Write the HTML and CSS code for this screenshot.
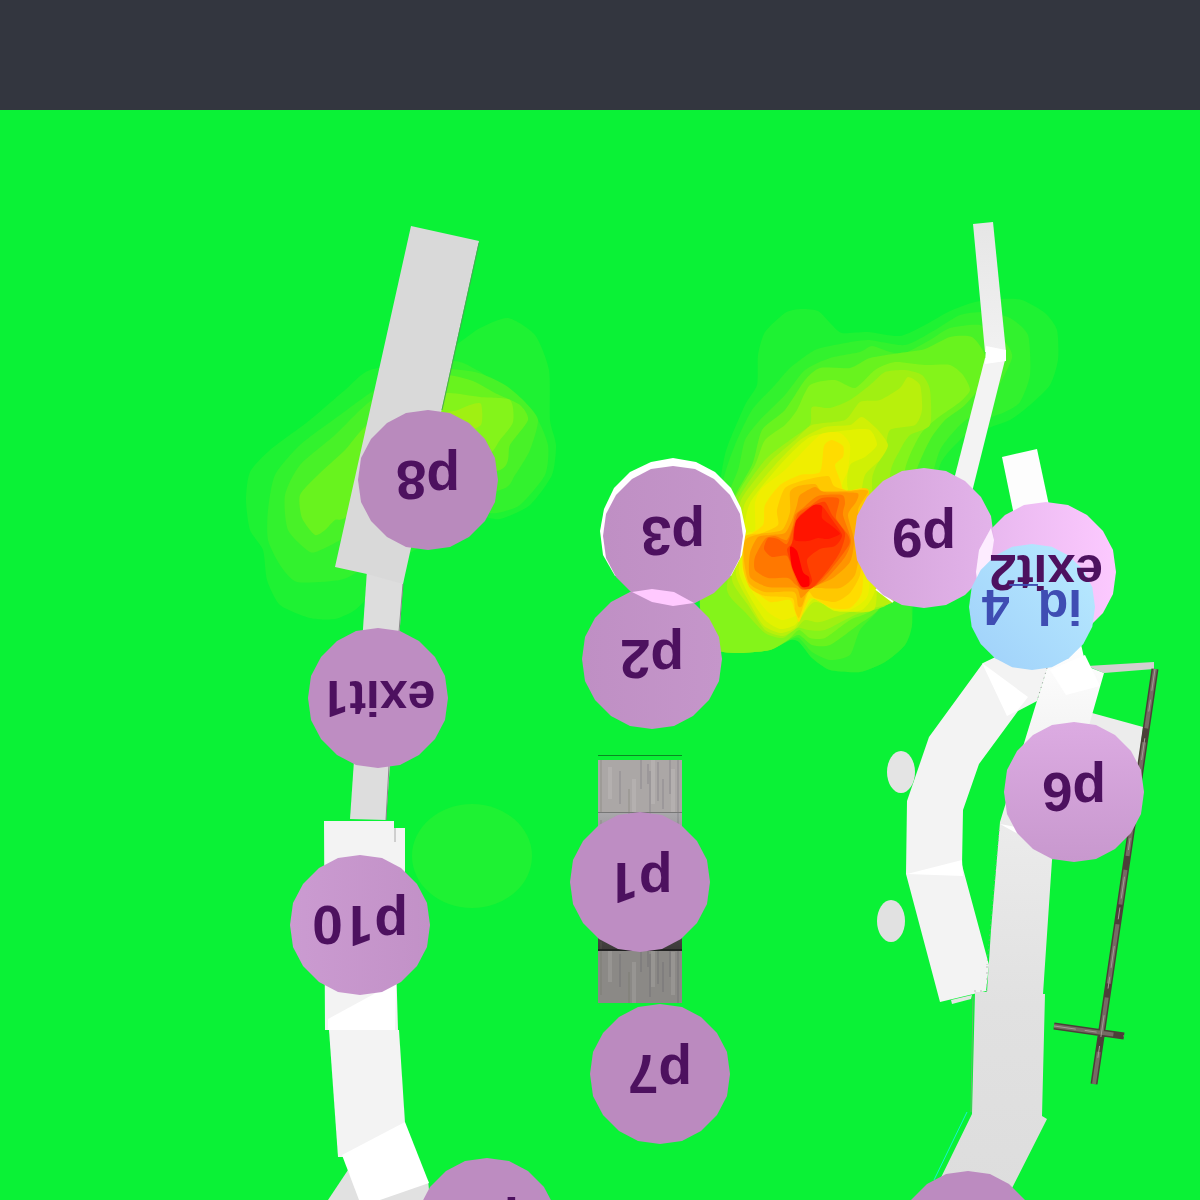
FILE: index.html
```
<!DOCTYPE html>
<html lang="en">
<head>
<meta charset="utf-8">
<title>Heat map</title>
<link rel="stylesheet" href="styles.css">
</head>
<body>
<header class="topbar"></header>
<main class="stage">
<svg class="map" viewBox="0 110 1200 1090" role="img" aria-label="Heat map with markers">
  <defs>
    <polygon id="disc" points="0,-70 22,-67 41,-57 57,-41 67,-22 70,0 67,22 57,41 41,57 22,67 0,70 -22,67 -41,57 -57,41 -67,22 -70,0 -67,-22 -57,-41 -41,-57 -22,-67"/>
    <linearGradient id="column" x1="0" y1="0" x2="0" y2="1">
      <stop offset="0" stop-color="#ffffff"/><stop offset=".3" stop-color="#ececec"/><stop offset=".65" stop-color="#e1e1e1"/><stop offset="1" stop-color="#dddddd"/>
    </linearGradient>
    <linearGradient id="stick" x1="0" y1="0" x2="0" y2="1">
      <stop offset="0" stop-color="#e6e6e6"/><stop offset="1" stop-color="#f1f1f1"/>
    </linearGradient>
    <linearGradient id="g3"><stop offset="0" stop-color="#bf8fc4"/><stop offset="1" stop-color="#c596ca"/></linearGradient>
    <linearGradient id="g10"><stop offset="0" stop-color="#cb9bd1"/><stop offset="1" stop-color="#c291c7"/></linearGradient>
    <linearGradient id="g9"><stop offset="0" stop-color="#d3a3d9"/><stop offset="1" stop-color="#e3b3ea"/></linearGradient>
    <linearGradient id="g6" x1="0" y1="0" x2="0" y2="1"><stop offset="0" stop-color="#dcabe2"/><stop offset="1" stop-color="#c898ce"/></linearGradient>
    <linearGradient id="gx"><stop offset="0" stop-color="#e6b6ed"/><stop offset="1" stop-color="#fcc9ff"/></linearGradient>
    <linearGradient id="gid" x1="1" y1="0" x2="0" y2="1"><stop offset="0" stop-color="#b9ebff"/><stop offset="1" stop-color="#9fd0fa"/></linearGradient>
    <linearGradient id="dark" x1="0" y1="0" x2="0" y2="1"><stop offset="0" stop-color="#aaa9ac"/><stop offset="1" stop-color="#3c3a38"/></linearGradient>
    <pattern id="streaks" width="84" height="61" patternUnits="userSpaceOnUse" x="598" y="759">
      <path d="M3 0V53M31 30V61" stroke="#665" stroke-width="1" opacity=".4"/>
      <path d="M12 8V40M36 20V61M55 0V45M75 10V53" stroke="#fff" stroke-width="4" opacity=".1"/>
      <path d="M22 12V45M43 0V30M50 5V25M52 12V55M60 3V42M65 20V50M72 0V35M80 0V61" stroke="#334" stroke-width="2" opacity=".13"/>
    </pattern>
  </defs>

  <rect class="ground" x="0" y="110" width="1200" height="1090"/>
  <g id="heat"></g>
  <ellipse cx="472" cy="856" rx="60" ry="52" fill="#1ef233"/>

  <!-- left walkway -->
  <polygon points="367,570 404,560 403,584 386,820 350,819" fill="#dddddd"/>
  <path d="M403 584L399 632M389 766L386 820" stroke="#888" stroke-width="1"/>
  <polygon points="411,226 479,241 403,584 367,574 335,567" fill="#d9d9d9"/>
  <path d="M479 243L442 410" stroke="#49a855" stroke-width="1"/>
  <polygon points="324,821 394,821 394,828 405,828 405,900 396,960 398,1030 325,1030" fill="#f3f3f3"/>
  <path d="M395 828V842" stroke="#aaa" stroke-width="1"/>
  <polygon points="328,1019 396,982 395,1030 328,1030" fill="#fff"/>
  <polygon points="329,1030 399,1030 405,1123 343,1157 338,1157" fill="#f3f3f3"/>
  <polygon points="348,1170 328,1200 362,1200" fill="#e1e1e1"/>
  <polygon points="378,1200 428,1180 430,1200" fill="#e1e1e1"/>
  <polygon points="342,1155 405,1122 429,1183 380,1200 359,1200" fill="#fff"/>

  <!-- centre platform -->
  <path d="M598 755.500H682" stroke="#0a8a22" stroke-width="1"/>
  <rect x="598" y="760" width="84" height="52" fill="#aba7a6"/>
  <rect x="598" y="812" width="84" height="138" fill="url(#dark)"/>
  <rect x="598" y="951" width="84" height="52" fill="#8b8986"/>
  <rect x="598" y="760" width="84" height="243" fill="url(#streaks)"/>
  <path d="M598 812.500H682" stroke="#777" stroke-width="1"/>
  <path d="M598 950H682" stroke="#222" stroke-width="2"/>

  <!-- right walkways -->
  <polygon points="973,224 993,222 1006,352 985,352" fill="url(#stick)"/>
  <polygon points="985,358 1005,360 970,500 950,495" fill="#f3f3f3"/>
  <polygon points="986,346 1006,350 1006,361 985,364" fill="#fff"/>
  <polygon points="1002,457 1037,449 1050,510 1015,520" fill="#fdfdfd"/>
  <polygon points="1087,666 1154,662 1154,669 1104,673" fill="#d3d0d0"/>
  <polygon points="1092,713 1143,727 1135,790 1080,740" fill="#ececec"/>
  <polygon points="983,663 1010,650 1050,660 1037,701 1018,711 979,764 963,810 962,865 989,965 986,991 940,1002 906,874 907,801 929,737" fill="#f3f3f3"/>
  <polygon points="982,663 1028,697 1017,711 1007,716" fill="#fff"/>
  <polygon points="907,874 962,860 963,876" fill="#fff"/>
  <polygon points="951,1000 972,995 971,999 952,1004" fill="#e4e4e4"/>
  <polygon points="1047,668 1080,640 1086,666 1104,673 1090,722 1052,860 1043,994 1045,994 1042,1116 1047,1119 1006,1200 930,1200 972,1114 975,992 987,992 991,930 1000,822 1025,740" fill="url(#column)"/>
  <polygon points="1050,670 1085,655 1100,686 1066,695" fill="#fff"/>
  <polygon points="1000,824 1016,827 1020,835" fill="#fff"/>
  <path d="M1047 668L1037 701M999 830L987 965" stroke="#999" stroke-width="1" stroke-dasharray="1 4"/>
  <path d="M973 996L971 1112" stroke="#63b96d" stroke-width="1"/>
  <path d="M974 991H987V965" fill="none" stroke="#bbb" stroke-width="1" stroke-dasharray="2 4"/>
  <path d="M967 1112L934 1180" stroke="#12f5d0" stroke-width="1"/>
  <ellipse cx="901" cy="772" rx="14" ry="21" fill="#e4e4e4"/>
  <ellipse cx="891" cy="921" rx="14" ry="21" fill="#e1e1e1"/>

  <!-- fence pole -->
  <g class="pole">
    <path class="pole-base" d="M1155 669L1094 1084M1054 1026L1124 1036"/>
    <path class="pole-mid" d="M1155 669L1094 1084M1054 1026L1124 1036"/>
    <path class="pole-grain" d="M1155 669L1094 1084M1054 1026L1124 1036"/>
  </g>

  <!-- markers -->
  <polygon points="673,458 696,462 715,472 731,488 741,508 746,531 742,555 731,576 615,576 603,555 600,531 604,509 614,488 630,472 651,462" fill="#fff"/>
  <path d="M876 589L893 602" stroke="#fff" stroke-width="2"/>
  <g class="marker" transform="translate(428 480)"><use href="#disc" fill="#b98abd"/><text y="19" transform="rotate(180)">p8</text></g>
  <g class="marker" transform="translate(673 536)"><use href="#disc" fill="url(#g3)"/><text y="19" transform="rotate(180)">p3</text></g>
  <g class="marker" transform="translate(652 659)"><use href="#disc" fill="url(#g3)"/><text y="19" transform="rotate(180)">p2</text></g>
  <polygon points="632,592 652,589 674,592 694,603 673,606 652,602" fill="#ffc9ff"/>
  <g class="marker" transform="translate(640 882)"><use href="#disc" fill="#be8dc3"/><text y="19" transform="rotate(180)">p<tspan class="one">1</tspan></text></g>
  <g class="marker" transform="translate(660 1074)"><use href="#disc" fill="#bb8abf"/><text y="19" transform="rotate(180)">p7</text></g>
  <g class="marker" transform="translate(360 925)"><use href="#disc" fill="url(#g10)"/><text y="19" transform="rotate(180)">p<tspan class="one">1</tspan>0</text></g>
  <g class="marker small" transform="translate(378 698)"><use href="#disc" fill="#be8dc2"/><text y="17" transform="rotate(180)">exit<tspan class="one">1</tspan></text></g>
  <g class="marker" transform="translate(1074 792)"><use href="#disc" fill="url(#g6)"/><text y="19" transform="rotate(180)">p6</text></g>
  <use href="#disc" transform="translate(1046 572)" fill="url(#gx)"/>
  <g class="marker" transform="translate(924 538)"><use href="#disc" fill="url(#g9)"/><text y="19" transform="rotate(180)">p9</text></g>
  <polygon points="991,528 994,540 991,560 977,580 976,572 979,550" fill="#fdecff"/>
  <use href="#disc" transform="translate(1032 607) scale(.9)" fill="url(#gid)"/>
  <g class="marker small" transform="translate(1046 572)"><text y="17" transform="rotate(180)">exit2</text></g>
  <g class="marker small person" transform="translate(1032 607)"><text y="17" transform="rotate(180)">id_4</text></g>
  <g class="marker" transform="translate(487 1228)"><use href="#disc" fill="#bd8cc1"/><text y="19" transform="rotate(180)">p4</text></g>
  <use href="#disc" transform="translate(968 1241)" fill="#bc8bc0"/>
</svg>
</main>
<script src="heat.js"></script>
</body>
</html>
```
FILE: styles.css
```
html {
  background: #0af236;
}
body {
  margin: 0;
  font-family: "Liberation Sans", Arial, sans-serif;
}
.topbar {
  height: 110px;
  background: #33363f;
}
.stage {
  overflow: hidden;
}
.map {
  display: block;
  width: 100%;
}
.ground {
  fill: #0af236;
}
.marker text {
  font-size: 55px;
  font-weight: 700;
  text-anchor: middle;
  fill: #4d115f;
}
.marker.small text {
  font-size: 50px;
}
.marker.person text {
  fill: #3f4db3;
}
.one {
  font-family: Roboto, sans-serif;
}
.pole path {
  fill: none;
}
.pole-base {
  stroke: #4c3f39;
  stroke-width: 7;
}
.pole-mid {
  stroke: #766b64;
  stroke-width: 4;
  stroke-dasharray: 60 14 35 20;
}
.pole-grain {
  stroke: #a39b95;
  stroke-width: 1;
  stroke-dasharray: 22 9 12 27;
}
```
FILE: heat.js
```
// Contours of the heat map, lowest level first: [colour, x, y, x, y, ...]
const contours = [
  ["#1ef233", 370,370, 345,390, 310,420, 270,450, 250,472, 246,500, 250,530, 263,550, 267,580, 280,605, 310,618, 335,619, 355,610, 375,590, 400,560, 470,518, 500,519, 530,505, 552,475, 556,445, 550,420, 549,370, 535,335, 508,318, 480,328, 460,342, 430,360],
  ["#32f22e", 378,388, 340,415, 300,445, 275,475, 268,510, 268,540, 280,565, 297,582, 340,580, 360,570, 400,540, 470,515, 497,513, 520,505, 545,475, 548,445, 535,415, 510,395, 485,375, 460,362, 430,362],
  ["#48f228", 372,400, 335,435, 300,465, 285,495, 288,530, 310,552, 325,548, 350,535, 400,510, 500,490, 515,475, 530,450, 538,420, 525,402, 505,385, 475,372, 430,370],
  ["#68f31e", 367,425, 345,450, 318,475, 300,495, 302,518, 315,535, 325,530, 335,520, 345,518, 400,490, 500,470, 510,445, 528,420, 520,405, 495,393, 470,380, 430,376],
  ["#84f41a", 430,397, 450,393, 480,397, 510,400, 513,422, 500,440, 485,455, 430,430],
  ["#a0f012", 440,415, 458,410, 470,405, 481,404, 481,425, 460,432],

  ["#1ef233", 722,470, 728,445, 745,405, 757,385, 758,355, 765,332, 785,313, 800,309, 818,311, 832,325, 842,333, 868,332, 900,336, 925,325, 950,311, 975,302, 1000,299, 1022,300, 1045,313, 1057,330, 1058,360, 1050,385, 1030,405, 1010,420, 985,430, 970,450, 950,480, 930,520, 915,580, 913,605, 912,625, 905,645, 885,662, 860,672, 830,670, 812,658, 799,642, 790,640, 770,650, 740,653, 715,648, 700,600],
  ["#32f22e", 722,485, 735,445, 752,410, 775,385, 790,368, 815,350, 840,344, 868,340, 905,345, 935,330, 960,315, 985,312, 1010,318, 1028,335, 1030,375, 1020,402, 1005,412, 985,420, 960,440, 940,465, 930,520, 912,580, 912,625, 905,645, 885,662, 860,672, 830,670, 812,658, 799,642, 790,640, 770,650, 740,653, 715,648, 700,600],
  ["#48f228", 722,510, 738,470, 745,440, 760,420, 785,395, 805,370, 830,358, 860,352, 872,346, 890,352, 905,353, 930,340, 950,328, 980,325, 1003,340, 1012,358, 990,400, 960,425, 940,450, 928,490, 900,570, 880,608, 860,630, 850,655, 830,660, 812,652, 799,638, 790,640, 770,650, 740,653, 715,648, 700,600],
  ["#68f31e", 728,510, 752,465, 762,430, 785,410, 805,380, 820,368, 850,368, 870,358, 900,353, 925,349, 950,337, 972,337, 985,355, 985,380, 965,405, 945,420, 930,440, 915,475, 900,550, 880,607, 858,625, 830,645, 812,645, 799,635, 788,640, 770,650, 740,653, 715,648, 700,600],
  ["#84f41a", 732,505, 755,465, 765,440, 785,425, 797,410, 810,385, 835,380, 855,388, 875,370, 895,362, 925,365, 950,365, 963,375, 970,390, 960,402, 935,420, 920,435, 905,470, 895,550, 875,607, 850,620, 825,638, 810,638, 799,630, 788,640, 770,650, 740,653, 715,648, 700,600],
  ["#a0f012", 738,500, 765,460, 790,440, 810,425, 812,407, 830,408, 850,400, 870,385, 885,372, 905,370, 922,375, 930,390, 930,425, 910,435, 900,450, 890,475, 890,550, 890,602, 855,615, 825,630, 808,630, 797,628, 783,638, 765,633, 745,612, 727,590, 735,540],
  ["#b8f00c", 741,500, 770,462, 795,440, 812,425, 845,420, 860,402, 880,400, 900,388, 908,377, 920,385, 922,410, 915,425, 890,430, 885,450, 872,480, 880,550, 895,600, 850,612, 820,622, 805,620, 797,628, 783,636, 765,630, 748,605, 732,580, 737,540],
  ["#d0f005", 745,503, 775,465, 800,440, 825,427, 850,425, 862,417, 878,430, 888,445, 880,460, 865,475, 862,500, 875,550, 875,608, 845,611, 815,602, 803,615, 795,628, 780,633, 763,625, 748,600, 736,575, 740,540],
  ["#e2f200", 750,503, 780,465, 810,437, 850,430, 870,430, 877,445, 865,457, 850,465, 848,490, 870,550, 875,590, 862,610, 835,611, 814,599, 804,612, 795,625, 780,629, 765,620, 750,597, 739,572, 742,540],
  ["#f0ee00", 755,503, 762,488, 785,470, 820,435, 840,433, 850,445, 848,470, 842,492, 868,550, 868,595, 850,610, 832,609, 812,597, 804,608, 795,616, 782,620, 768,612, 753,593, 742,570, 745,535, 755,530],
  ["#ffdc00", 763,525, 765,505, 780,485, 800,475, 820,472, 824,446, 832,440, 843,446, 843,457, 835,465, 840,480, 845,491, 868,491, 864,550, 862,592, 850,608, 832,608, 812,598, 806,605, 799,622, 795,612, 790,600, 770,602, 755,590, 745,570, 745,540],
  ["#ffc800", 778,525, 777,510, 785,488, 805,480, 828,476, 834,486, 850,491, 869,491, 862,550, 860,575, 850,593, 835,602, 815,598, 809,592, 804,604, 799,618, 795,610, 792,598, 765,596, 750,588, 743,568, 744,537, 762,533],
  ["#ffb000", 782,530, 790,512, 790,492, 798,486, 815,484, 822,491, 845,491, 868,491, 858,510, 860,545, 855,575, 840,588, 815,588, 808,590, 802,606, 798,606, 794,592, 765,592, 749,583, 744,560, 745,540, 760,534],
  ["#ff9400", 785,533, 792,520, 797,505, 800,495, 815,487, 824,492, 857,493, 856,502, 848,515, 854,540, 850,562, 833,578, 812,588, 801,598, 796,588, 768,587, 750,577, 750,553, 758,537, 770,535],
  ["#ff7800", 787,540, 793,525, 795,515, 804,507, 818,496, 842,495, 845,503, 843,515, 851,540, 845,557, 825,580, 806,590, 796,585, 788,578, 768,578, 755,570, 755,557, 765,539, 775,536],
  ["#ff5c00", 787,544, 793,528, 798,513, 810,506, 822,498, 839,499, 836,518, 848,535, 849,545, 832,568, 815,586, 801,589, 793,572, 787,556, 772,557, 764,549, 768,538, 778,539],
  ["#ff4000", 792,543, 794,528, 799,516, 812,506, 825,502, 832,515, 845,533, 840,552, 828,570, 812,588, 801,587, 793,568, 787,550],
  ["#ff2800", 793,540, 795,526, 800,516, 815,505, 823,507, 831,518, 842,535, 835,546, 820,549, 807,560, 812,580, 808,586, 800,582, 790,552],
  ["#ff1400", 794,538, 796,521, 806,511, 814,505, 822,506, 822,518, 832,526, 840,534, 828,539, 818,538, 808,541, 797,541],
  ["#ff0000", 790,547, 797,551, 803,572, 809,577, 809,586, 801,586, 792,567]
];

// Closed curve that runs through every point of the contour
function smooth(v) {
  const n = v.length / 2;
  const p = i => [v[((i + n) % n) * 2], v[((i + n) % n) * 2 + 1]];
  const lean = (a, b, c, sign) => [a[0] + sign * (c[0] - b[0]) / 9, a[1] + sign * (c[1] - b[1]) / 9];
  let d = "M" + p(0);
  for (let i = 0; i < n; i++) {
    const start = lean(p(i), p(i - 1), p(i + 1), 1);
    const end = lean(p(i + 1), p(i), p(i + 2), -1);
    d += "C" + start + " " + end + " " + p(i + 1);
  }
  return d + "Z";
}

const heat = document.getElementById("heat");
for (const [colour, ...points] of contours) {
  const path = document.createElementNS("http://www.w3.org/2000/svg", "path");
  path.setAttribute("d", smooth(points));
  path.setAttribute("fill", colour);
  heat.append(path);
}
```
